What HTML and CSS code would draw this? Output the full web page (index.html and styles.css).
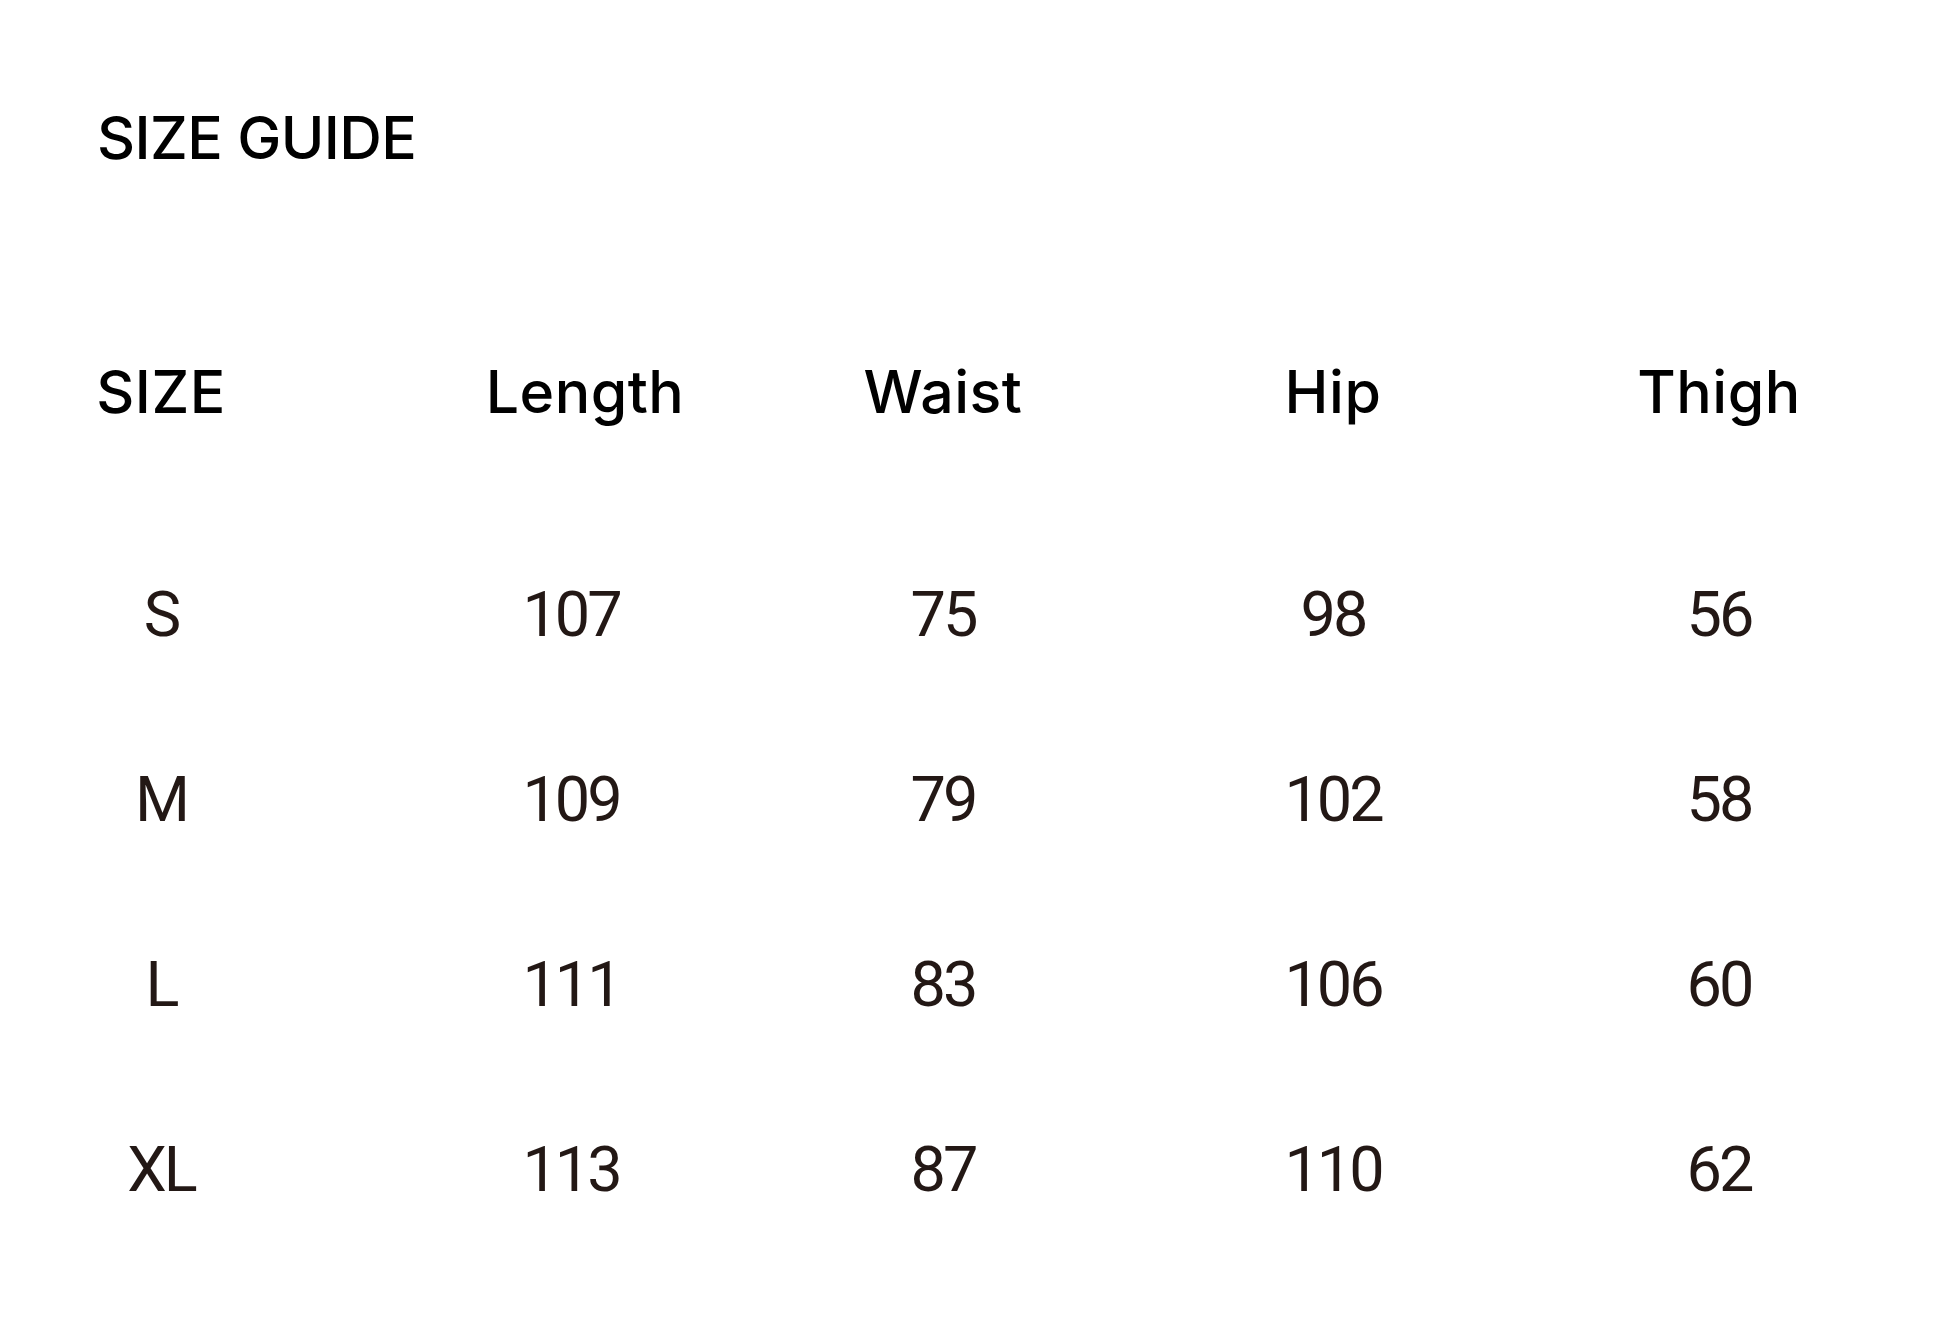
FILE: index.html
```html
<!DOCTYPE html>
<html lang="en">
<head>
<meta charset="utf-8">
<title>Size Guide</title>
<link rel="stylesheet" href="styles.css">
</head>
<body>
<main class="page">
  <h1 class="title">SIZE GUIDE</h1>
  <div class="table">
    <div class="row head">
      <div class="cell">SIZE</div>
      <div class="cell">Length</div>
      <div class="cell">Waist</div>
      <div class="cell">Hip</div>
      <div class="cell">Thigh</div>
    </div>
    <div class="row data">
      <div class="cell">S</div>
      <div class="cell">107</div>
      <div class="cell">75</div>
      <div class="cell">98</div>
      <div class="cell">56</div>
    </div>
    <div class="row data">
      <div class="cell">M</div>
      <div class="cell">109</div>
      <div class="cell">79</div>
      <div class="cell">102</div>
      <div class="cell">58</div>
    </div>
    <div class="row data">
      <div class="cell">L</div>
      <div class="cell">111</div>
      <div class="cell">83</div>
      <div class="cell">106</div>
      <div class="cell">60</div>
    </div>
    <div class="row data">
      <div class="cell">XL</div>
      <div class="cell">113</div>
      <div class="cell">87</div>
      <div class="cell">110</div>
      <div class="cell">62</div>
    </div>
  </div>
</main>
</body>
</html>
```
FILE: styles.css
```css
html, body {
  margin: 0;
  padding: 0;
  background: #ffffff;
}

.page {
  width: 1946px;
  height: 1324px;
  box-sizing: border-box;
  padding-top: 88px;
  padding-left: 97px;
}

.title {
  margin: 0;
  font-family: Inter, "Liberation Sans", sans-serif;
  font-weight: 500;
  font-size: 59px;
  line-height: 100px;
  letter-spacing: -0.6px;
  color: #000;
}

.table {
  margin-top: 154px;
  margin-left: -86px;
  display: flex;
  flex-direction: column;
}

.row {
  display: grid;
  grid-template-columns: 300px 534px 196px 584px 188px;
}

.cell {
  text-align: center;
  white-space: nowrap;
}

.head {
  height: 100px;
  line-height: 100px;
  font-family: Inter, "Liberation Sans", sans-serif;
  font-weight: 500;
  font-size: 59px;
  letter-spacing: 0.5px;
  color: #000;
  margin-bottom: 80px;
}

.head .cell:nth-child(2) {
  padding-left: 14px;
}

.data {
  height: 185px;
  line-height: 185px;
  font-family: Roboto, "Liberation Sans", sans-serif;
  font-size: 63px;
  letter-spacing: -3px;
  color: #231815;
}

.data .cell:nth-child(2) {
  padding-right: 14px;
}
```
